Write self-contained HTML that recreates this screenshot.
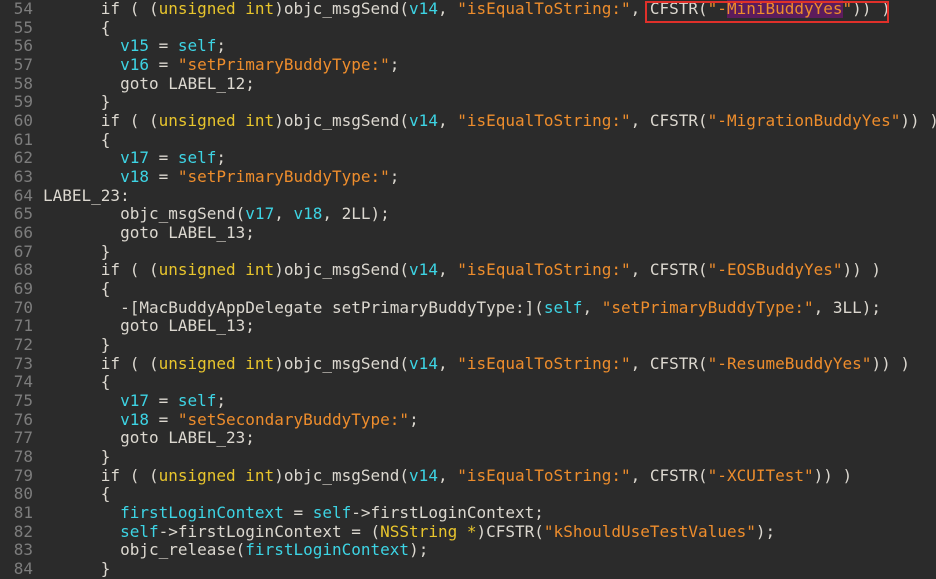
<!DOCTYPE html>
<html><head><meta charset="utf-8"><style>
html,body{margin:0;padding:0;background:#2b2b2b;width:936px;height:576px;overflow:hidden}
.w{position:absolute;left:0;top:0;font-family:"DejaVu Sans Mono","Liberation Mono",monospace;font-size:16px;line-height:18.67px;color:#dcd8d0;white-space:pre}
.ln{position:absolute;left:0;top:0;width:33px;text-align:right;color:#7d7d7d}
.code{position:absolute;left:43px;top:0}
.y{color:#e8c52c}.c{color:#3dd4e4}.o{color:#ee8d2c}
.hl{background:#5c1c5c}
.box{position:absolute;left:645px;top:1px;width:240px;height:18px;border:2px solid #e0302a}
</style></head><body>
<div class="w"><div class="ln">54
55
56
57
58
59
60
61
62
63
64
65
66
67
68
69
70
71
72
73
74
75
76
77
78
79
80
81
82
83
84</div><div class="code">      if ( (<span class="y">unsigned int</span>)objc_msgSend(<span class="c">v14</span>, <span class="o">"isEqualToString:"</span>, CFSTR(<span class="o">"-<span class="hl">MiniBuddyYes</span>"</span>)) )
      {
        <span class="c">v15</span> = <span class="c">self</span>;
        <span class="c">v16</span> = <span class="o">"setPrimaryBuddyType:"</span>;
        goto LABEL_12;
      }
      if ( (<span class="y">unsigned int</span>)objc_msgSend(<span class="c">v14</span>, <span class="o">"isEqualToString:"</span>, CFSTR(<span class="o">"-MigrationBuddyYes"</span>)) )
      {
        <span class="c">v17</span> = <span class="c">self</span>;
        <span class="c">v18</span> = <span class="o">"setPrimaryBuddyType:"</span>;
LABEL_23:
        objc_msgSend(<span class="c">v17</span>, <span class="c">v18</span>, 2LL);
        goto LABEL_13;
      }
      if ( (<span class="y">unsigned int</span>)objc_msgSend(<span class="c">v14</span>, <span class="o">"isEqualToString:"</span>, CFSTR(<span class="o">"-EOSBuddyYes"</span>)) )
      {
        -[MacBuddyAppDelegate setPrimaryBuddyType:](<span class="c">self</span>, <span class="o">"setPrimaryBuddyType:"</span>, 3LL);
        goto LABEL_13;
      }
      if ( (<span class="y">unsigned int</span>)objc_msgSend(<span class="c">v14</span>, <span class="o">"isEqualToString:"</span>, CFSTR(<span class="o">"-ResumeBuddyYes"</span>)) )
      {
        <span class="c">v17</span> = <span class="c">self</span>;
        <span class="c">v18</span> = <span class="o">"setSecondaryBuddyType:"</span>;
        goto LABEL_23;
      }
      if ( (<span class="y">unsigned int</span>)objc_msgSend(<span class="c">v14</span>, <span class="o">"isEqualToString:"</span>, CFSTR(<span class="o">"-XCUITest"</span>)) )
      {
        <span class="c">firstLoginContext</span> = <span class="c">self</span>-&gt;firstLoginContext;
        <span class="c">self</span>-&gt;firstLoginContext = (<span class="y">NSString *</span>)CFSTR(<span class="o">"kShouldUseTestValues"</span>);
        objc_release(<span class="c">firstLoginContext</span>);
      }</div></div>
<div class="box"></div>
</body></html>
